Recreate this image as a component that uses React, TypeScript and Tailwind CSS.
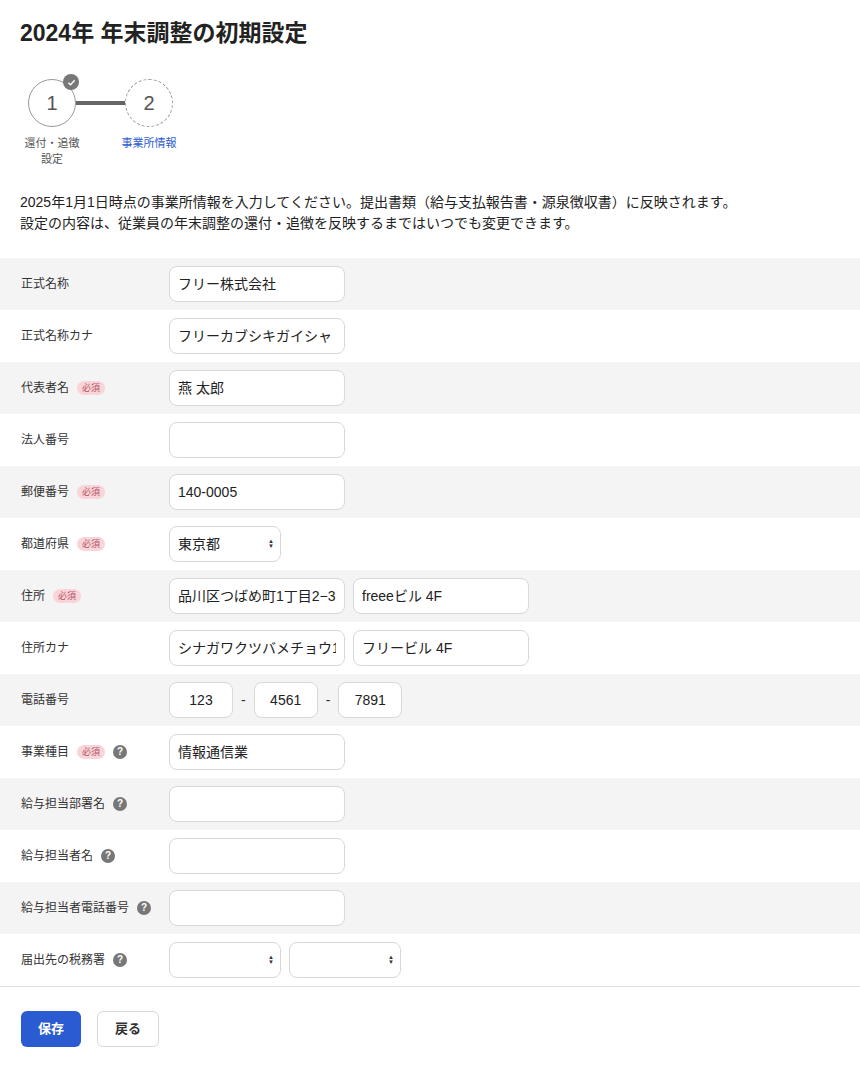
import { ReactNode } from "react"

const font = { fontFamily: '"Liberation Sans", "Noto Sans CJK JP", sans-serif' }

const Req = () => (
  <span className="ml-2 rounded-full bg-[#f9d4d8] px-[5px] text-[9px] leading-[14px] text-[#b4566a]">必須</span>
)
const Help = () => (
  <span className="ml-2 inline-flex h-[14px] w-[14px] items-center justify-center rounded-full bg-[#777] text-[10px] font-bold leading-none text-white">?</span>
)

const Input = ({ v = "", w = "w-[176px]", center = false }: { v?: string; w?: string; center?: boolean }) => (
  <div className={`${w} flex h-[36px] items-center rounded-lg border border-[#d8d8d8] bg-white px-2 text-[14px] text-[#222] ${center ? "justify-center" : ""}`}>
    <span className="overflow-hidden whitespace-nowrap">{v}</span>
  </div>
)
const Select = ({ v = "" }: { v?: string }) => (
  <div className="flex h-[36px] w-[112px] items-center justify-between rounded-lg border border-[#d8d8d8] bg-white pl-2 pr-[6px] text-[14px] text-[#222]">
    <span>{v}</span>
    <span className="flex flex-col text-[6px] leading-[5px] text-[#333]"><span>▲</span><span>▼</span></span>
  </div>
)

const Row = ({ label, req, help, alt, children }: { label: string; req?: boolean; help?: boolean; alt: boolean; children: ReactNode }) => (
  <div className={`flex h-[52px] items-center ${alt ? "bg-[#f5f4f4]" : "bg-white"}`}>
    <div className="flex w-[169px] items-center pl-[21px] text-[12px] text-[#333]">
      {label}
      {req && <Req />}
      {help && <Help />}
    </div>
    <div className="flex items-center gap-2">{children}</div>
  </div>
)

export default function App() {
  const rows: [string, boolean, boolean, ReactNode][] = [
    ["正式名称", false, false, <Input v="フリー株式会社" />],
    ["正式名称カナ", false, false, <Input v="フリーカブシキガイシャ" />],
    ["代表者名", true, false, <Input v="燕 太郎" />],
    ["法人番号", false, false, <Input />],
    ["郵便番号", true, false, <Input v="140-0005" />],
    ["都道府県", true, false, <Select v="東京都" />],
    ["住所", true, false, <><Input v="品川区つばめ町1丁目2−3" /><Input v="freeeビル 4F" /></>],
    ["住所カナ", false, false, <><Input v="シナガワクツバメチョウ1チョウメ" /><Input v="フリービル 4F" /></>],
    ["電話番号", false, false, <div className="flex items-center gap-[8px] text-[14px] text-[#333]"><Input v="123" w="w-[64px]" center /><span>-</span><Input v="4561" w="w-[64px]" center /><span>-</span><Input v="7891" w="w-[64px]" center /></div>],
    ["事業種目", true, true, <Input v="情報通信業" />],
    ["給与担当部署名", false, true, <Input />],
    ["給与担当者名", false, true, <Input />],
    ["給与担当者電話番号", false, true, <Input />],
    ["届出先の税務署", false, true, <><Select /><Select /></>],
  ]
  return (
    <div className="min-h-[1075px] w-[860px] bg-white text-[#333]" style={font}>
      <h1 className="px-[20px] pt-[17px] text-[23px] font-bold leading-[32px] text-[#222]">2024年 年末調整の初期設定</h1>
      <div className="mt-[30px] flex items-start pl-[20px]">
        <div className="flex w-[64px] flex-col items-center">
          <div className="relative flex h-[48px] w-[48px] items-center justify-center rounded-full border border-[#999] text-[20px] text-[#555]">
            1
            <span className="absolute -right-[4px] -top-[6px] flex h-[16px] w-[16px] items-center justify-center rounded-full bg-[#777]">
              <svg width="9" height="9" viewBox="0 0 10 10"><path d="M1.5 5.2 4 7.5 8.5 2.5" stroke="white" strokeWidth="1.5" fill="none" /></svg>
            </span>
          </div>
          <div className="mt-[8px] text-center text-[11px] leading-[16px] text-[#555]">還付・追徴<br />設定</div>
        </div>
        <div className="mt-[22px] -mx-[8px] h-[4px] w-[49px] bg-[#666]" />
        <div className="flex w-[64px] flex-col items-center">
          <div className="flex h-[48px] w-[48px] items-center justify-center rounded-full border border-dashed border-[#999] text-[20px] text-[#555]">2</div>
          <div className="mt-[8px] text-[11px] leading-[16px] text-[#2a5bd0]">事業所情報</div>
        </div>
      </div>
      <p className="mt-[25px] px-[20px] text-[14px] leading-[21px] text-[#222]">
        2025年1月1日時点の事業所情報を入力してください。提出書類（給与支払報告書・源泉徴収書）に反映されます。<br />
        設定の内容は、従業員の年末調整の還付・追徴を反映するまではいつでも変更できます。
      </p>
      <div className="mt-[24px] border-b border-[#e2e2e2]">
        {rows.map(([l, r, h, c], i) => (
          <Row key={l} label={l} req={r} help={h} alt={i % 2 === 0}>{c}</Row>
        ))}
      </div>
      <div className="flex gap-4 px-[21px] pt-[24px]">
        <button className="h-[36px] w-[60px] rounded-md bg-[#2a5bd0] text-[13px] font-bold text-white">保存</button>
        <button className="h-[36px] w-[62px] rounded-md border border-[#d8d8d8] bg-white text-[13px] font-bold text-[#333]">戻る</button>
      </div>
    </div>
  )
}
